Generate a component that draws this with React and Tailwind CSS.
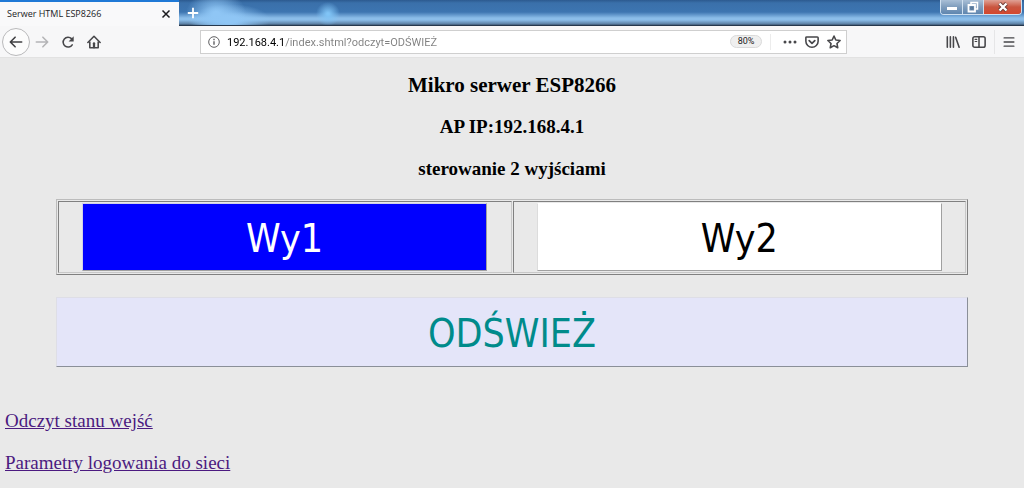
import React, { useState } from 'react';

const TOOL_BUTTON = 'flex h-6 items-center justify-center text-[#47474a] shrink-0';

// Small wrapper shared by every toolbar glyph
const Icon = ({ className = 'w-4 h-4', children }) => (
  <svg
    viewBox="0 0 16 16"
    className={className}
    fill="none"
    stroke="currentColor"
    strokeWidth="1.8"
    strokeLinecap="round"
    strokeLinejoin="round"
    aria-hidden="true"
  >
    {children}
  </svg>
);

const WindowControls = () => (
  <div className="ml-auto mr-[2px] flex h-[15px] overflow-hidden rounded-b border-x border-b border-[#cfe0f0]">
    <button
      type="button"
      aria-label="Minimalizuj"
      className="flex w-[21px] items-end justify-center bg-linear-to-b from-[#a9bfd6] via-[#7f9dbd] to-[#5f86af] pb-1"
    >
      <span className="h-[3px] w-[10px] bg-white" />
    </button>
    <button
      type="button"
      aria-label="Przywróć"
      className="flex w-[22px] items-center justify-center border-x border-[#cfe0f0] bg-linear-to-b from-[#a9bfd6] via-[#7f9dbd] to-[#5f86af]"
    >
      <svg viewBox="0 0 12 12" className="h-3 w-3" fill="none" aria-hidden="true">
        <path d="M4 1.5h6.5V8H4z" stroke="#fff" strokeWidth="1.5" />
        <path d="M1.5 4H8v6.5H1.5z" fill="#6f8fb3" stroke="#fff" strokeWidth="1.8" />
        <path d="M3.8 6.2h2v2h-2z" stroke="#4f6d8c" strokeWidth=".8" />
      </svg>
    </button>
    <button
      type="button"
      aria-label="Zamknij okno"
      className="flex w-[37px] items-center justify-center bg-linear-to-b from-[#dfa195] via-[#c9553f] to-[#d4482f]"
    >
      <svg viewBox="0 0 12 12" className="h-3 w-3" aria-hidden="true">
        <path d="M2.5 2.5l7 7M9.5 2.5l-7 7" stroke="#6b3a35" strokeWidth="4" />
        <path d="M2.5 2.5l7 7M9.5 2.5l-7 7" stroke="#fff" strokeWidth="2.4" />
      </svg>
    </button>
  </div>
);

const TitleBar = () => (
  <div className="flex h-[26px] border-b border-[#26384d] bg-[radial-gradient(ellipse_30px_24px_at_216px_14px,#8fc6f5_10%,transparent),radial-gradient(ellipse_40px_16px_at_230px_20px,#8fc6f5_20%,transparent),radial-gradient(ellipse_12px_12px_at_328px_14px,#80c4f6_10%,transparent),linear-gradient(to_bottom,#2c5a8f_0,#3a70aa_3px,#3d75b1_12px,#8bbde9_18px,#8bbde9_20px,#5b7fa3_24px,#3c536c_25px)]">
    <div className="-mb-px flex w-[179px] items-center justify-between border-t-2 border-[#1f79d6] bg-[#f9f9fa] pl-[7px] pr-2">
      <span className="text-[9px] text-[#1c1c1f]">Serwer HTML ESP8266</span>
      <button type="button" aria-label="Zamknij kartę" className="text-[#1c1c1f]">
        <svg viewBox="0 0 10 10" className="h-[10px] w-[10px]" stroke="currentColor" strokeWidth="1.5" aria-hidden="true">
          <path d="M1.5 1.5l7 7M8.5 1.5l-7 7" />
        </svg>
      </button>
    </div>
    <button type="button" aria-label="Nowa karta" className="ml-2 text-white">
      <svg viewBox="0 0 12 12" className="h-3 w-3" stroke="currentColor" strokeWidth="1.8" aria-hidden="true">
        <path d="M6 .8v10.4M.8 6h10.4" />
      </svg>
    </button>
    <WindowControls />
  </div>
);

const AddressBar = () => {
  const [url, setUrl] = useState('192.168.4.1/index.shtml?odczyt=ODŚWIEŻ');

  return (
    <div className="flex h-6 min-w-0 flex-1 items-center border border-[#cfcfcf] bg-white pl-[7px] pr-[5px]">
      <button type="button" aria-label="Informacje o stronie" className={TOOL_BUTTON}>
        <svg viewBox="0 0 12 12" className="h-3 w-3" fill="none" stroke="#5f5f62" aria-hidden="true">
          <circle cx="6" cy="6" r="5.3" />
          <path d="M6 5.2v3.5" strokeWidth="1.4" />
          <path d="M6 2.8v1.4" strokeWidth="1.4" />
        </svg>
      </button>
      {/* Host is darker than the rest of the address */}
      <input
        type="text"
        aria-label="Adres"
        value={url}
        onChange={(e) => setUrl(e.target.value)}
        className="ml-[7px] h-5 min-w-0 flex-1 bg-linear-to-r from-black from-[57px] to-[#808080] to-[57px] bg-clip-text pt-px font-[Roboto,sans-serif] text-[11px] text-transparent outline-none"
      />
      <button
        type="button"
        className="h-[13px] w-8 shrink-0 rounded-full border border-[#dadada] bg-[#efefef] font-[Roboto,sans-serif] text-[9px] leading-[11px] text-[#222]"
      >
        80%
      </button>
      <div className="ml-2 mr-3 h-4 w-px bg-[#ececec]" />
      <button type="button" aria-label="Akcje strony" className={TOOL_BUTTON}>
        <svg viewBox="0 0 14 4" className="h-1 w-[14px]" fill="currentColor" aria-hidden="true">
          <circle cx="2" cy="2" r="1.5" />
          <circle cx="7" cy="2" r="1.5" />
          <circle cx="12" cy="2" r="1.5" />
        </svg>
      </button>
      <button type="button" aria-label="Zapisz w Pocket" className={`${TOOL_BUTTON} ml-2`}>
        <Icon className="h-[14px] w-[14px]">
          <path d="M2 2.2h12a1 1 0 0 1 1 1V7a7 7 0 0 1-14 0V3.2a1 1 0 0 1 1-1z" />
          <path d="M4.8 6.5L8 9.5l3.2-3" strokeWidth="2" />
        </Icon>
      </button>
      <button type="button" aria-label="Dodaj zakładkę" className={`${TOOL_BUTTON} ml-2`}>
        <Icon className="h-[14px] w-[14px]">
          <path d="M8 1.2l2.1 4.5 4.9.6-3.6 3.4.9 4.9L8 12.2l-4.3 2.4.9-4.9L1 6.3l4.9-.6z" />
        </Icon>
      </button>
    </div>
  );
};

const Toolbar = () => (
  <div className="flex h-8 items-center border-b border-[#e2e2e2] bg-[#f7f7f8] pl-[2px] pr-[9px]">
    <button
      type="button"
      aria-label="Wstecz"
      className="flex h-7 w-7 shrink-0 items-center justify-center rounded-full border border-[#b9b9bb] bg-[#fcfcfc] text-[#3f3f42]"
    >
      <Icon className="h-[14px] w-[14px]">
        <path d="M14.5 8H2M7 2.5L1.5 8 7 13.5" />
      </Icon>
    </button>
    <button type="button" aria-label="Dalej" className={`${TOOL_BUTTON} ml-[5px]`}>
      <Icon className="h-[14px] w-[14px] text-[#b4b4b6]">
        <path d="M1.5 8H14M9 2.5l5.5 5.5L9 13.5" />
      </Icon>
    </button>
    <button type="button" aria-label="Odśwież stronę" className={`${TOOL_BUTTON} ml-3`}>
      <Icon className="h-[14px] w-[14px]">
        <path d="M12.8 11.2A5.6 5.6 0 1 1 12 4.2" />
        <path d="M14.5 1.5v5.8H8.7z" fill="currentColor" stroke="none" />
      </Icon>
    </button>
    <button type="button" aria-label="Strona startowa" className={`${TOOL_BUTTON} ml-3`}>
      <Icon className="h-[14px] w-[14px]">
        <path d="M1 8.5l7-7 7 7" />
        <path d="M3.2 8v6.5h9.6V8" />
        <path d="M8 9.5v4.5" strokeWidth="2.6" />
      </Icon>
    </button>
    <div className="flex min-w-0 flex-1 px-[99px]">
      <AddressBar />
    </div>
    <button type="button" aria-label="Biblioteka" className={TOOL_BUTTON}>
      <Icon className="h-[14px] w-[14px]">
        <path d="M1.5 2v12M5 2v12M8.500 2v12M11 2.5L15 14" />
      </Icon>
    </button>
    <button type="button" aria-label="Panel boczny" className={`${TOOL_BUTTON} ml-3`}>
      <Icon className="h-[14px] w-[14px]">
        <rect x="1" y="2" width="14" height="12" rx="2" />
        <path d="M8 2v12" />
        <path d="M3.5 5h2M3.5 7.5h2" strokeWidth="1.2" />
      </Icon>
    </button>
    <div className="mx-2 h-6 w-px bg-[#e6e6e7]" />
    <button type="button" aria-label="Menu" className={TOOL_BUTTON}>
      <Icon className="h-3 w-3">
        <path d="M1.5 2.5h13M1.5 8h13M1.5 13.5h13" />
      </Icon>
    </button>
  </div>
);

const OutputCell = ({ label, className }) => (
  <td className="w-1/2 border border-t-[#808080] border-l-[#808080] border-b-[#c8c8c8] border-r-[#c8c8c8] p-px">
    <button
      type="button"
      className={`mx-auto block h-[68px] w-9/10 border border-b-[#a0a0a0] border-r-[#a0a0a0] pt-1 font-['DejaVu_Sans_Condensed','DejaVu_Sans',sans-serif] text-[39px] leading-[60px] ${className}`}
    >
      {label}
    </button>
  </td>
);

export default function App() {
  return (
    <div className="flex min-h-screen flex-col bg-[#e9e9e9]">
      <header className="font-['Open_Sans','Noto_Sans',sans-serif]">
        <TitleBar />
        <Toolbar />
      </header>

      <main className="flex-1 px-[5px] pt-[15px] font-['Liberation_Serif',serif] text-black">
        <div className="text-center font-bold">
          <h1 className="mb-[18px] text-[21px] leading-6">Mikro serwer ESP8266</h1>
          <h2 className="mb-[18px] text-[19px] leading-6">AP IP:192.168.4.1</h2>
          <h2 className="mb-[18px] text-[19px] leading-6">sterowanie 2 wyjściami</h2>
        </div>

        <table className="mx-auto w-9/10 table-fixed border-separate border-spacing-px border border-t-[#bcbcbc] border-l-[#bcbcbc] border-b-[#808080] border-r-[#808080]">
          <tbody>
            <tr>
              <OutputCell label="Wy1" className="border-t-[#d0d0e8] border-l-[#d0d0e8] bg-[#0000ff] text-white" />
              <OutputCell label="Wy2" className="border-t-white border-l-[#dcdcdc] bg-white text-black" />
            </tr>
          </tbody>
        </table>

        <button
          type="button"
          className="mx-auto mt-[22px] block h-[70px] w-9/10 border border-t-[#dedee6] border-l-[#dedee6] border-r-[#8a8f98] border-b-[#8a8f98] bg-[#e4e5f9] pt-1 font-['DejaVu_Sans_Condensed','DejaVu_Sans',sans-serif] text-[39px] leading-[60px] text-[#008b8b]"
        >
          ODŚWIEŻ
        </button>

        <nav className="mt-[42px] flex flex-col items-start gap-[18px] text-[19px] leading-6 text-[#4b1a80]">
          <a href="#wejscia" className="underline">Odczyt stanu wejść</a>
          <a href="#siec" className="underline">Parametry logowania do sieci</a>
        </nav>
      </main>
    </div>
  );
}
